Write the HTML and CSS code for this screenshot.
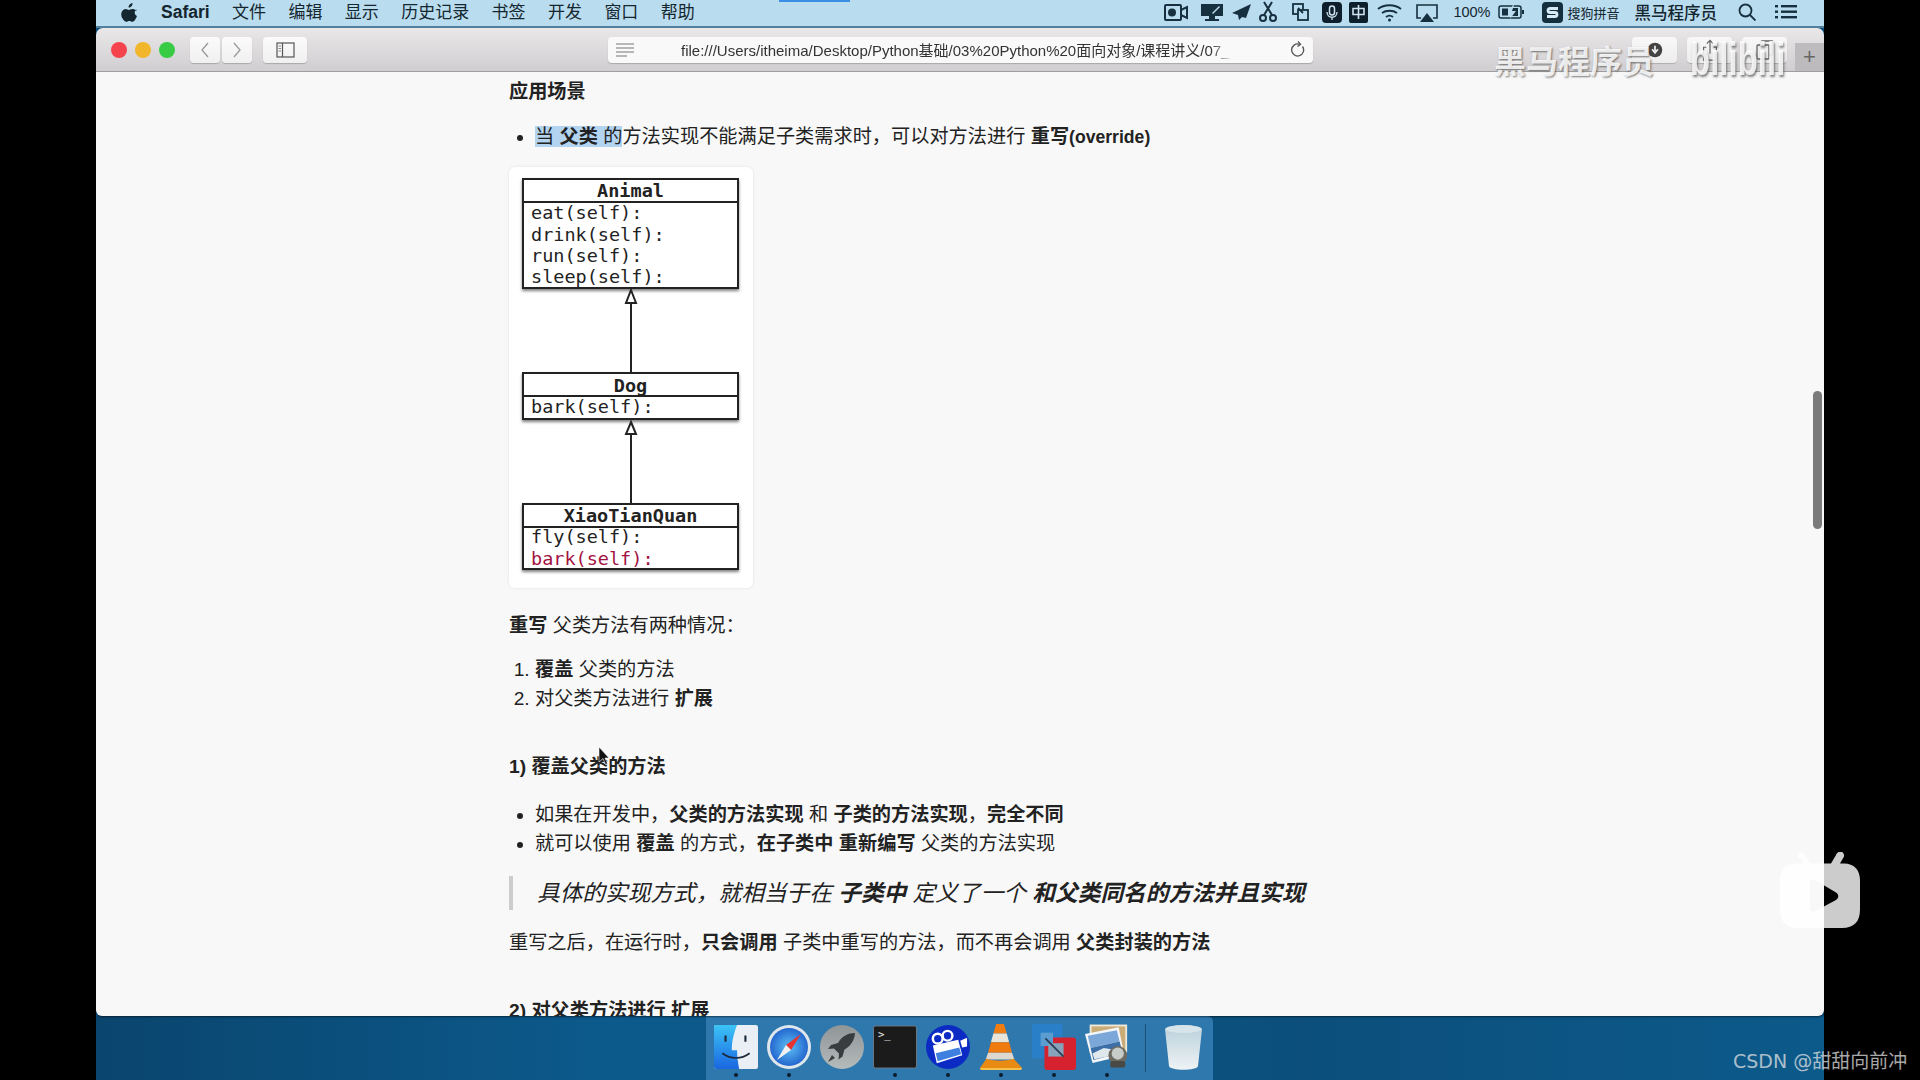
FILE: index.html
```html
<!DOCTYPE html>
<html lang="zh-CN">
<head>
  <meta charset="UTF-8" />
  <title>Safari - 方法的重写</title>
  <link rel="stylesheet" href="styles.css">
</head>
<body>
  <div class="screen">
    <div class="load-bar"></div>

    <!-- menu bar -->
    <header class="menubar">
      <svg class="apple" viewBox="0 0 16 19"><path d="M11.6 0c.1 1.300-.4 2.400-1.100 3.200-.7.800-1.800 1.500-2.900 1.400C7.400 3.400 8 2.200 8.700 1.500 9.400.700 10.600.100 11.600 0zM15.500 6.500c-1 .7-1.800 1.700-1.800 3.100 0 1.700 1 2.900 2.300 3.500-.3 1-.9 2.100-1.600 3.200-.8 1.200-1.700 2.500-3 2.500-1.200 0-1.600-.8-3.100-.8s-2 .8-3.100.8c-1.300 0-2.200-1.300-3.100-2.600C.400 14.300-.2 11.700.600 9.300 1.300 7.300 2.900 6 4.700 6c1.300 0 2.300.9 3.100.9.800 0 1.900-1 3.400-1 1.700 0 3.200.7 4.300 1.600z"/></svg>
      <nav class="menus">
        <b>Safari</b><span>文件</span><span>编辑</span><span>显示</span><span>历史记录</span><span>书签</span><span>开发</span><span>窗口</span><span>帮助</span>
      </nav>
      <svg class="tray" viewBox="0 0 274 26" fill="none" stroke="#16303f" stroke-width="2">
        <g><rect x="1" y="6" width="16" height="15" rx="1"/><circle cx="8" cy="13.500" r="3" fill="#16303f"/><path d="M17 11l6-3v11l-6-3"/></g>
        <g fill="#16303f" stroke="none"><path d="M37 5h22v12H37z"/><path d="M45 17h6v3h4v2H41v-2h4z"/><path d="M48 14l7-7 1 1-7 7z" fill="#b9dcee"/></g>
        <path d="M87 5L68 14l6 2 1 5 3-3 4 1z" fill="#16303f" stroke="none"/>
        <g><circle cx="99" cy="19" r="3"/><circle cx="109" cy="19" r="3"/><path d="M100 16l8-13M108 16l-8-13"/></g>
        <g stroke-width="1.800"><rect x="129" y="5" width="10" height="10"/><rect x="134" y="11" width="10" height="10" fill="#b9dcee"/><path d="M134 9l5 5"/></g>
        <g><rect x="158" y="3" width="20" height="21" rx="4" fill="#0d1f2c" stroke="none"/><rect x="165.500" y="7" width="5" height="9" rx="2.500" stroke="#cfe3ee" stroke-width="1.500"/><path d="M163 13c0 7 10 7 10 0M168 18v3" stroke="#cfe3ee" stroke-width="1.300"/></g>
        <g><rect x="185" y="3" width="19" height="21" rx="2" fill="#0d1f2c" stroke="none"/><path d="M189 9.500h11v6h-11zM194.500 6v14" stroke="#cfe3ee" stroke-width="1.600"/></g>
        <g stroke-width="1.800"><path d="M214 10c6-5 17-5 23 0M218 14c4-3 11-3 15 0M222 18c2-1.500 5-1.500 7 0"/><circle cx="225.500" cy="21" r="1.500" fill="#16303f" stroke="none"/></g>
        <g stroke-width="1.600"><path d="M257 19h-4V6h20v13h-4"/><path d="M263 14l7 9h-14z" fill="#16303f" stroke="none"/></g>
      </svg>
      <span class="pct">100%</span>
      <svg class="battery" viewBox="0 0 27 14" fill="none" stroke="#16303f" stroke-width="1.500"><rect x="1" y="1" width="22" height="12" rx="2"/><path d="M4 3.500h6v7H4zM14 3h6v8h-6z" fill="#16303f" stroke="none"/><path d="M15 0l-5 7h4l-2 7 6-8h-4l2-6z" fill="#b9dcee" stroke="none"/><path d="M25 5v4" stroke-width="2"/></svg>
      <svg class="sogou" viewBox="0 0 21 21"><rect width="21" height="21" rx="4" fill="#14303f"/><path d="M16 6.500H8a2 2 0 0 0 0 4h5a2 2 0 0 1 0 4H5" fill="none" stroke="#d7ebf5" stroke-width="2.800"/></svg>
      <span class="ime">搜狗拼音</span>
      <span class="user">黑马程序员</span>
      <svg class="search" viewBox="0 0 18 18" fill="none" stroke="#16303f" stroke-width="1.800"><circle cx="7.500" cy="7.500" r="6"/><path d="M12 12l5.500 5.500"/></svg>
      <svg class="list" viewBox="0 0 22 14" fill="#16303f"><rect width="3" height="2.400"/><rect y="5.500" width="3" height="2.400"/><rect y="11" width="3" height="2.400"/><rect x="6" width="16" height="2.400"/><rect x="6" y="5.500" width="16" height="2.400"/><rect x="6" y="11" width="16" height="2.400"/></svg>
    </header>

    <!-- safari window -->
    <div class="toolbar">
      <div class="lights"><i class="red"></i><i class="yellow"></i><i class="green"></i></div>
      <div class="nav-btns">
        <button class="btn"><svg viewBox="0 0 10 18" fill="none" stroke="#9a9a9a" stroke-width="1.300"><path d="M8 2L2 9l6 7"/></svg></button>
        <button class="btn"><svg viewBox="0 0 10 18" fill="none" stroke="#9a9a9a" stroke-width="1.300"><path d="M2 2l6 7-6 7"/></svg></button>
      </div>
      <button class="btn sidebar-btn"><svg viewBox="0 0 19 16" fill="none" stroke="#555" stroke-width="1.200"><rect x="1" y="1" width="17" height="14"/><path d="M6.500 1v14"/><path d="M2.500 4h2.500M2.500 6.500h2.500M2.500 9h2.500" stroke="#888"/></svg></button>
      <div class="urlbar">
        <svg class="reader" viewBox="0 0 18 14" stroke="#777" stroke-width="1.200"><path d="M0 1h18M0 5h18M0 9h18M0 13h11"/></svg>
        <span class="url">file:///Users/itheima/Desktop/Python基础/03%20Python%20面向对象/课程讲义/07_</span>
        <svg class="reload" viewBox="0 0 14 17" fill="none" stroke="#555" stroke-width="1.300"><path d="M11.500 5.500a6 6 0 1 1-3-2.200"/><path d="M7 0.500l2.500 2.800L6.500 5.500"/></svg>
      </div>
      <button class="btn tool-btn dl"><svg viewBox="0 0 22 22"><circle cx="11" cy="11" r="10" fill="#333"/><path d="M11 5v8M7 10l4 5 4-5" fill="none" stroke="#eee" stroke-width="2.400"/></svg></button>
      <button class="btn tool-btn"><svg viewBox="0 0 18 24" fill="none" stroke="#555" stroke-width="1.300"><path d="M5 9H2v14h14V9h-3M9 16V2M5.500 5L9 1.500 12.500 5"/></svg></button>
      <button class="btn tool-btn"><svg viewBox="0 0 20 22" fill="none" stroke="#555" stroke-width="1.300"><rect x="6" y="2" width="12" height="14" rx="1"/><rect x="2" y="6" width="12" height="14" rx="1" fill="#f3f3f3"/></svg></button>
      <button class="new-tab">+</button>
    </div>

    <main class="page">
      <h4>应用场景</h4>
      <ul>
        <li><span class="sel">当 <b>父类</b> 的</span>方法实现不能满足子类需求时，可以对方法进行 <b>重写<span class="latin">(override)</span></b></li>
      </ul>

      <figure class="card">
        <svg class="uml" viewBox="0 0 244 421" width="244" height="421">
          <defs>
            <filter id="boxshadow" x="-5%" y="-5%" width="110%" height="120%"><feDropShadow dx="0" dy="2" stdDeviation="1.500" flood-color="#000" flood-opacity=".5"/></filter>
          </defs>
          <g class="box">
            <rect x="14" y="12" width="215" height="109" filter="url(#boxshadow)"/>
            <path d="M14 35h215"/>
            <rect x="14" y="206" width="215" height="46" filter="url(#boxshadow)"/>
            <path d="M14 229h215"/>
            <rect x="14" y="337" width="215" height="65" filter="url(#boxshadow)"/>
            <path d="M14 360h215"/>
            <path d="M122 136v70M122 267v70"/>
            <path d="M122 123l5 13h-10z"/>
            <path d="M122 255l5 12h-10z"/>
          </g>
          <text class="title" x="121.500" y="30">Animal</text>
          <text x="22" y="52">eat(self):</text>
          <text x="22" y="74">drink(self):</text>
          <text x="22" y="95">run(self):</text>
          <text x="22" y="116">sleep(self):</text>
          <text class="title" x="121.500" y="225">Dog</text>
          <text x="22" y="246">bark(self):</text>
          <text class="title" x="121.500" y="355">XiaoTianQuan</text>
          <text x="22" y="376">fly(self):</text>
          <text class="override" x="22" y="398">bark(self):</text>
        </svg>
      </figure>

      <p class="intro"><b>重写</b> 父类方法有两种情况：</p>
      <ol>
        <li><b>覆盖</b> 父类的方法</li>
        <li>对父类方法进行 <b>扩展</b></li>
      </ol>

      <h4 class="section">1) 覆盖父类的方法</h4>
      <ul class="points">
        <li>如果在开发中，<b>父类的方法实现</b> 和 <b>子类的方法实现</b>，<b>完全不同</b></li>
        <li>就可以使用 <b>覆盖</b> 的方式，<b>在子类中 重新编写</b> 父类的方法实现</li>
      </ul>
      <blockquote>具体的实现方式，就相当于在 <b>子类中</b> 定义了一个 <b>和父类同名的方法并且实现</b></blockquote>
      <p class="after">重写之后，在运行时，<b>只会调用</b> 子类中重写的方法，而不再会调用 <b>父类封装的方法</b></p>
      <h4 class="section">2) 对父类方法进行 扩展</h4>

      <div class="scrollbar"></div>
      <svg class="cursor" viewBox="0 0 11 18"><path d="M1 0v15l4-3.500 2.500 6 2-1-2.500-5.500h4z" fill="#111" stroke="#fff" stroke-width=".6"/></svg>
    </main>

    <!-- dock -->
    <div class="desktop">
      <div class="dock">
        <div class="dock-item running">
          <svg viewBox="0 0 42 42"><defs><linearGradient id="fblue" x1="0" y1="0" x2="0" y2="1"><stop offset="0" stop-color="#3cc4f6"/><stop offset="1" stop-color="#1a66e0"/></linearGradient></defs><rect width="42" height="42" rx="2" fill="#e9eff4"/><path d="M2 0h20c-3 8-5 15-5 24h5c0 6 1 12 2 18H2a2 2 0 0 1-2-2V2a2 2 0 0 1 2-2z" fill="url(#fblue)"/><path d="M11 10v6M30 10v6" stroke="#1b2a3a" stroke-width="2"/><path d="M8 27c8 6 18 6 26 0" fill="none" stroke="#1b2a3a" stroke-width="1.600"/></svg>
        </div>
        <div class="dock-item running">
          <svg viewBox="0 0 44 44"><defs><radialGradient id="sblue"><stop offset="0" stop-color="#5cc0f5"/><stop offset="1" stop-color="#2467cf"/></radialGradient></defs><circle cx="22" cy="22" r="22" fill="#dfe6ec"/><circle cx="22" cy="22" r="19" fill="url(#sblue)"/><path d="M34 9L19 20l5 5z" fill="#e8332f"/><path d="M10 35l9-15 5 5z" fill="#f2f2f2"/></svg>
        </div>
        <div class="dock-item">
          <svg viewBox="0 0 44 44"><defs><linearGradient id="lgray" x1="0" y1="0" x2="0" y2="1"><stop offset="0" stop-color="#8f9496"/><stop offset="1" stop-color="#b5babb"/></linearGradient></defs><circle cx="22" cy="22" r="22" fill="url(#lgray)"/><path d="M35 8c-7 0-13 3-17 10l-7 2-3 4 6-.500 5 5-.500 6 4-3 2-7c7-4 10-10 10.500-16.500z" fill="#3a3d3f"/><path d="M12 30l-4 7 7-4z" fill="#3a3d3f"/></svg>
        </div>
        <div class="dock-item running">
          <svg viewBox="0 0 45 44"><rect x=".5" y=".5" width="44" height="43" rx="2" fill="#1b1b1b" stroke="#6b7a85"/><text class="term" x="5" y="13">&gt;_</text></svg>
        </div>
        <div class="dock-item running">
          <svg viewBox="0 0 45 45"><circle cx="22.500" cy="22.500" r="22.500" fill="#0b2bc4"/><circle cx="12" cy="14" r="5" fill="none" stroke="#fff" stroke-width="2.500"/><circle cx="22" cy="11" r="5" fill="none" stroke="#fff" stroke-width="2.500"/><path d="M7 21l26-6 4 16-26 8z" fill="#fff"/><path d="M10 29l24-6 2 7-24 7z" fill="#3f7fe0"/><path d="M35 16l7-3v9l-5 1z" fill="#fff"/></svg>
        </div>
        <div class="dock-item running">
          <svg viewBox="0 0 44 48"><path d="M17 0h8l3 10H14z" fill="#f07c12"/><path d="M14 10h14l2.500 9h-19z" fill="#e9e4da"/><path d="M11.500 19h19l3 11h-25z" fill="#ef7a10"/><path d="M8.500 30h25l2.500 7H6z" fill="#dcd8d0"/><path d="M7 36c4 3 24 3 28 0l9 10H0z" fill="#e98a12"/><path d="M0 46h44l-1 2H1z" fill="#f6c14a"/></svg>
        </div>
        <div class="dock-item running">
          <svg viewBox="0 0 46 48"><rect width="32" height="36" rx="3" fill="#2a80c8"/><rect x="13" y="14" width="33" height="34" rx="3" fill="#d6222e"/><rect x="9" y="9" width="13" height="14" fill="#5b9dd0"/><rect x="17" y="20" width="16" height="14" fill="#86a3bb"/><path d="M14 15l19 19" stroke="#2a3f55" stroke-width="2"/></svg>
        </div>
        <div class="dock-item running">
          <svg viewBox="0 0 47 46"><rect x="6" y="0" width="38" height="28" fill="#c9ac77" stroke="#efe9da" stroke-width="2"/><path d="M0 9l36-7 6 30-34 8z" fill="#f4f6f7"/><path d="M3 11l31-6 3 12-31 7z" fill="#7ba8d8"/><path d="M6 24l31-7 3 12-31 8z" fill="#3c6ea8"/><path d="M8 30l12-6 18 3 1 3-29 6z" fill="#dfe8ec"/><circle cx="35" cy="32" r="10" fill="#6d6a62"/><circle cx="35" cy="30" r="6.500" fill="#c8ccc9"/><rect x="27" y="38" width="16" height="7" rx="2" fill="#4b4943"/></svg>
        </div>
        <div class="dock-sep"></div>
        <div class="dock-item trash">
          <svg viewBox="0 0 37 46"><defs><linearGradient id="tr" x1="0" y1="0" x2="0" y2="1"><stop offset="0" stop-color="#b9d0db"/><stop offset="1" stop-color="#eef3f5"/></linearGradient></defs><path d="M0 5C6 0 31 0 37 5l-4 37c-1 5-28 5-29 0z" fill="url(#tr)"/><ellipse cx="18.500" cy="5" rx="18" ry="4" fill="#d7e4ea"/></svg>
        </div>
      </div>
    </div>

    <!-- video overlays -->
    <div class="mark-heima">黑马程序员</div>
    <div class="mark-bili">bilibili</div>
  </div>

  <svg class="tv" viewBox="0 0 82 73" preserveAspectRatio="none"><path fill-rule="evenodd" d="M20 0c2 0 4 1 5 3l5 8h21l5-8c1-3 4-4 6-3s3 4 1 6l-3 5h4c10 0 16 6 16 16v28c0 12-6 18-18 18H18C6 73 0 67 0 55V27c0-10 6-16 16-16h8l-6-7c-1-2 0-4 2-4zM30 30v24c0 3 3 4 5 3l21-11c3-2 3-5 0-7L35 27c-2-1-5 0-5 3z" fill="#fff" fill-opacity=".8"/></svg>
  <div class="csdn">CSDN @甜甜向前冲</div>
</body>
</html>
```

FILE: styles.css
```css
* {
  box-sizing: border-box;
}
html, body {
  margin: 0;
  height: 100%;
  overflow: hidden;
}
body {
  background-color: #000;
  font-family: "Liberation Sans", "Noto Sans CJK SC", sans-serif;
  color: #222;
}
.screen {
  position: relative;
  width: 1728px;
  height: 1080px;
  margin: 0 auto;
  display: flex;
  flex-direction: column;
  background-color: #0b4f7d;
}
.load-bar {
  position: absolute;
  top: 0;
  left: 683px;
  width: 71px;
  height: 2px;
  background-color: #3b8ee6;
}

/* menu bar */
.menubar {
  height: 28px;
  flex: none;
  display: flex;
  align-items: center;
  padding: 0 27px 2px 25px;
  background-color: #b9dcee;
  border-bottom: 2px solid #527f9c;
  color: #14262f;
  font-size: 16.500px;
}
.apple {
  width: 16px;
  height: 19px;
  fill: #14262f;
}
.menus {
  display: flex;
  align-items: baseline;
  gap: 22.400px;
  margin-left: 24px;
  font-size: 17px;
  line-height: 24px;
}
.menus b {
  font-size: 17.500px;
}
.tray {
  width: 274px;
  height: 26px;
  margin-left: auto;
}
.pct {
  margin-left: 15px;
  font-size: 14.500px;
}
.battery {
  width: 27px;
  height: 14px;
  margin-left: 8px;
}
.sogou {
  width: 21px;
  height: 21px;
  margin-left: 17px;
}
.ime {
  margin-left: 4px;
  font-size: 13px;
}
.user {
  margin-left: 15px;
  font-size: 16.500px;
  font-weight: 500;
}
.search {
  width: 18px;
  height: 18px;
  margin-left: 21px;
}
.list {
  width: 22px;
  height: 14px;
  margin-left: 19px;
}

/* toolbar */
.toolbar {
  height: 44px;
  flex: none;
  display: flex;
  align-items: center;
  position: relative;
  padding-left: 15px;
  background: linear-gradient(#eae7e9, #d0ced0);
  border-bottom: 1px solid #a5a4a5;
  border-radius: 7px 7px 0 0;
}
.lights {
  display: flex;
  gap: 8px;
}
.lights i {
  width: 16px;
  height: 16px;
  border-radius: 50%;
}
.red { background-color: #f5434e; }
.yellow { background-color: #f2b62c; }
.green { background-color: #38cc45; }
.btn {
  height: 26px;
  padding: 0;
  border: 0;
  border-radius: 4px;
  background: linear-gradient(#fbfbfb, #f1f0f1);
  box-shadow: 0 1px 1px rgba(0,0,0,0.2);
  display: flex;
  align-items: center;
  justify-content: center;
}
.nav-btns {
  display: flex;
  gap: 2px;
  margin-left: 15px;
}
.nav-btns .btn {
  width: 30px;
}
.nav-btns svg {
  width: 10px;
  height: 18px;
}
.sidebar-btn {
  width: 44px;
  margin-left: 11px;
}
.sidebar-btn svg {
  width: 19px;
  height: 16px;
}
.urlbar {
  width: 705px;
  height: 26px;
  margin-left: 301px;
  display: flex;
  align-items: center;
  padding: 0 8px;
  background-color: #f9f9f9;
  border-radius: 4px;
  box-shadow: 0 1px 1px rgba(0,0,0,0.2);
}
.reader {
  width: 18px;
  height: 14px;
}
.url {
  width: 552px;
  margin-left: 47px;
  overflow: hidden;
  white-space: nowrap;
  font-size: 15px;
  color: #333;
  -webkit-mask-image: linear-gradient(90deg, #000 96%, transparent);
  mask-image: linear-gradient(90deg, #000 96%, transparent);
}
.reload {
  width: 14px;
  height: 17px;
  margin-left: auto;
}
.tool-btn {
  width: 45px;
  margin-left: 10px;
  opacity: .9;
}
.dl {
  margin-left: 319px;
}
.tool-btn svg {
  width: 20px;
  height: 22px;
}
.dl svg {
  width: 16px;
  height: 16px;
}
.new-tab {
  position: absolute;
  right: 0;
  bottom: 0;
  width: 29px;
  height: 28px;
  padding: 0;
  border: 0;
  background-color: #bdbbbd;
  color: #666;
  font-size: 22px;
  font-weight: 300;
  line-height: 28px;
  font-family: "Liberation Sans", sans-serif;
}

/* page content */
.page {
  position: relative;
  flex: 1;
  min-height: 0;
  overflow: hidden;
  padding: 5px 0 0 413px;
  background-color: #f8f8f8;
  font-size: 19.200px;
  line-height: 29px;
  border-radius: 0 0 6px 6px;
  box-shadow: 0 1px 2px rgba(0,0,0,0.5);
  z-index: 1;
}
.page h4 {
  margin: 0;
  font-size: 19.200px;
  line-height: 29px;
}
.page h4.section {
  margin-top: 39px;
}
.page ul, .page ol {
  margin: 16px 0 0;
  padding-left: 26px;
}
.page ul.points {
  margin-top: 19px;
}
.page p {
  margin: 0;
}
.latin {
  font-size: 17.600px;
  line-height: 1;
}
.sel {
  background-color: #b3d4f1;
}
.card {
  width: 244px;
  height: 421px;
  margin: 16px 0 0;
  background-color: #fff;
  border-radius: 6px;
  box-shadow: 0 0 3px rgba(0,0,0,0.1);
}
.uml {
  display: block;
}
.uml .box rect, .uml .box path {
  fill: #fff;
  stroke: #222;
  stroke-width: 2;
}
.uml text {
  font-family: "DejaVu Sans Mono", monospace;
  font-size: 18.500px;
  fill: #222;
}
.uml .title {
  font-weight: bold;
  text-anchor: middle;
}
.uml .override {
  fill: #a3123f;
}
.intro {
  padding-top: 23px;
}
.page ol {
  margin-top: 15px;
}
blockquote {
  height: 34px;
  margin: 18px 0 0;
  padding-left: 24px;
  border-left: 4px solid #ccc;
  font-size: 22.700px;
  font-style: italic;
  line-height: 34px;
  white-space: nowrap;
}
.after {
  padding-top: 18px;
}
.scrollbar {
  position: absolute;
  top: 319px;
  right: 2px;
  width: 9px;
  height: 138px;
  border-radius: 5px;
  background-color: #7b7b7b;
}
.cursor {
  position: absolute;
  left: 502px;
  top: 675px;
  width: 11px;
  height: 18px;
}

/* desktop and dock */
.desktop {
  height: 64px;
  flex: none;
  display: flex;
  justify-content: center;
  background: linear-gradient(90deg, #0a456e, #0c5a8c 30%, #0c4f7c 70%, #0c5a8a);
}
.dock {
  width: 507px;
  margin-left: -2px;
  display: flex;
  align-items: flex-start;
  gap: 9px;
  padding: 8px 0 0 8px;
  background-color: #2f78ad;
  border-radius: 0 6px 0 0;
}
.dock-item {
  position: relative;
  width: 44px;
  height: 46px;
  flex: none;
}
.dock-item svg {
  display: block;
  width: 44px;
  height: 46px;
}
.dock-item.running::after {
  content: "";
  position: absolute;
  left: 20px;
  top: 49px;
  width: 4px;
  height: 4px;
  border-radius: 50%;
  background-color: #0a1c2c;
}
.dock-sep {
  width: 1px;
  height: 48px;
  margin: 0 10px 0 7px;
  background-color: #1c4f75;
}
.dock-item.trash {
  width: 37px;
}
.dock-item.trash svg {
  width: 37px;
}
.term {
  font-family: "DejaVu Sans Mono", monospace;
  font-size: 11px;
  fill: #eee;
}

/* video overlays */
.mark-heima {
  position: absolute;
  left: 1398px;
  top: 41px;
  z-index: 3;
  font-size: 32px;
  font-weight: bold;
  line-height: 42px;
  color: rgba(255,255,255,0.85);
  text-shadow: 1px 1px 2px rgba(70,70,70,0.7);
  white-space: nowrap;
}
.mark-bili {
  position: absolute;
  left: 1594px;
  top: 40px;
  z-index: 3;
  font-family: "Liberation Sans", sans-serif;
  font-size: 33px;
  font-weight: bold;
  line-height: 40px;
  color: rgba(255,255,255,0.85);
  text-shadow: 1px 1px 2px rgba(70,70,70,0.7);
  transform: scaleY(1.400);
}
.tv {
  position: absolute;
  z-index: 3;
  left: 1780px;
  top: 852px;
  width: 82px;
  height: 76px;
}
.csdn {
  position: absolute;
  z-index: 3;
  left: 1733px;
  top: 1047px;
  font-family: "DejaVu Sans", "Noto Sans CJK SC", sans-serif;
  font-size: 19px;
  line-height: 28px;
  color: rgba(225,225,225,0.75);
  white-space: nowrap;
}
```
